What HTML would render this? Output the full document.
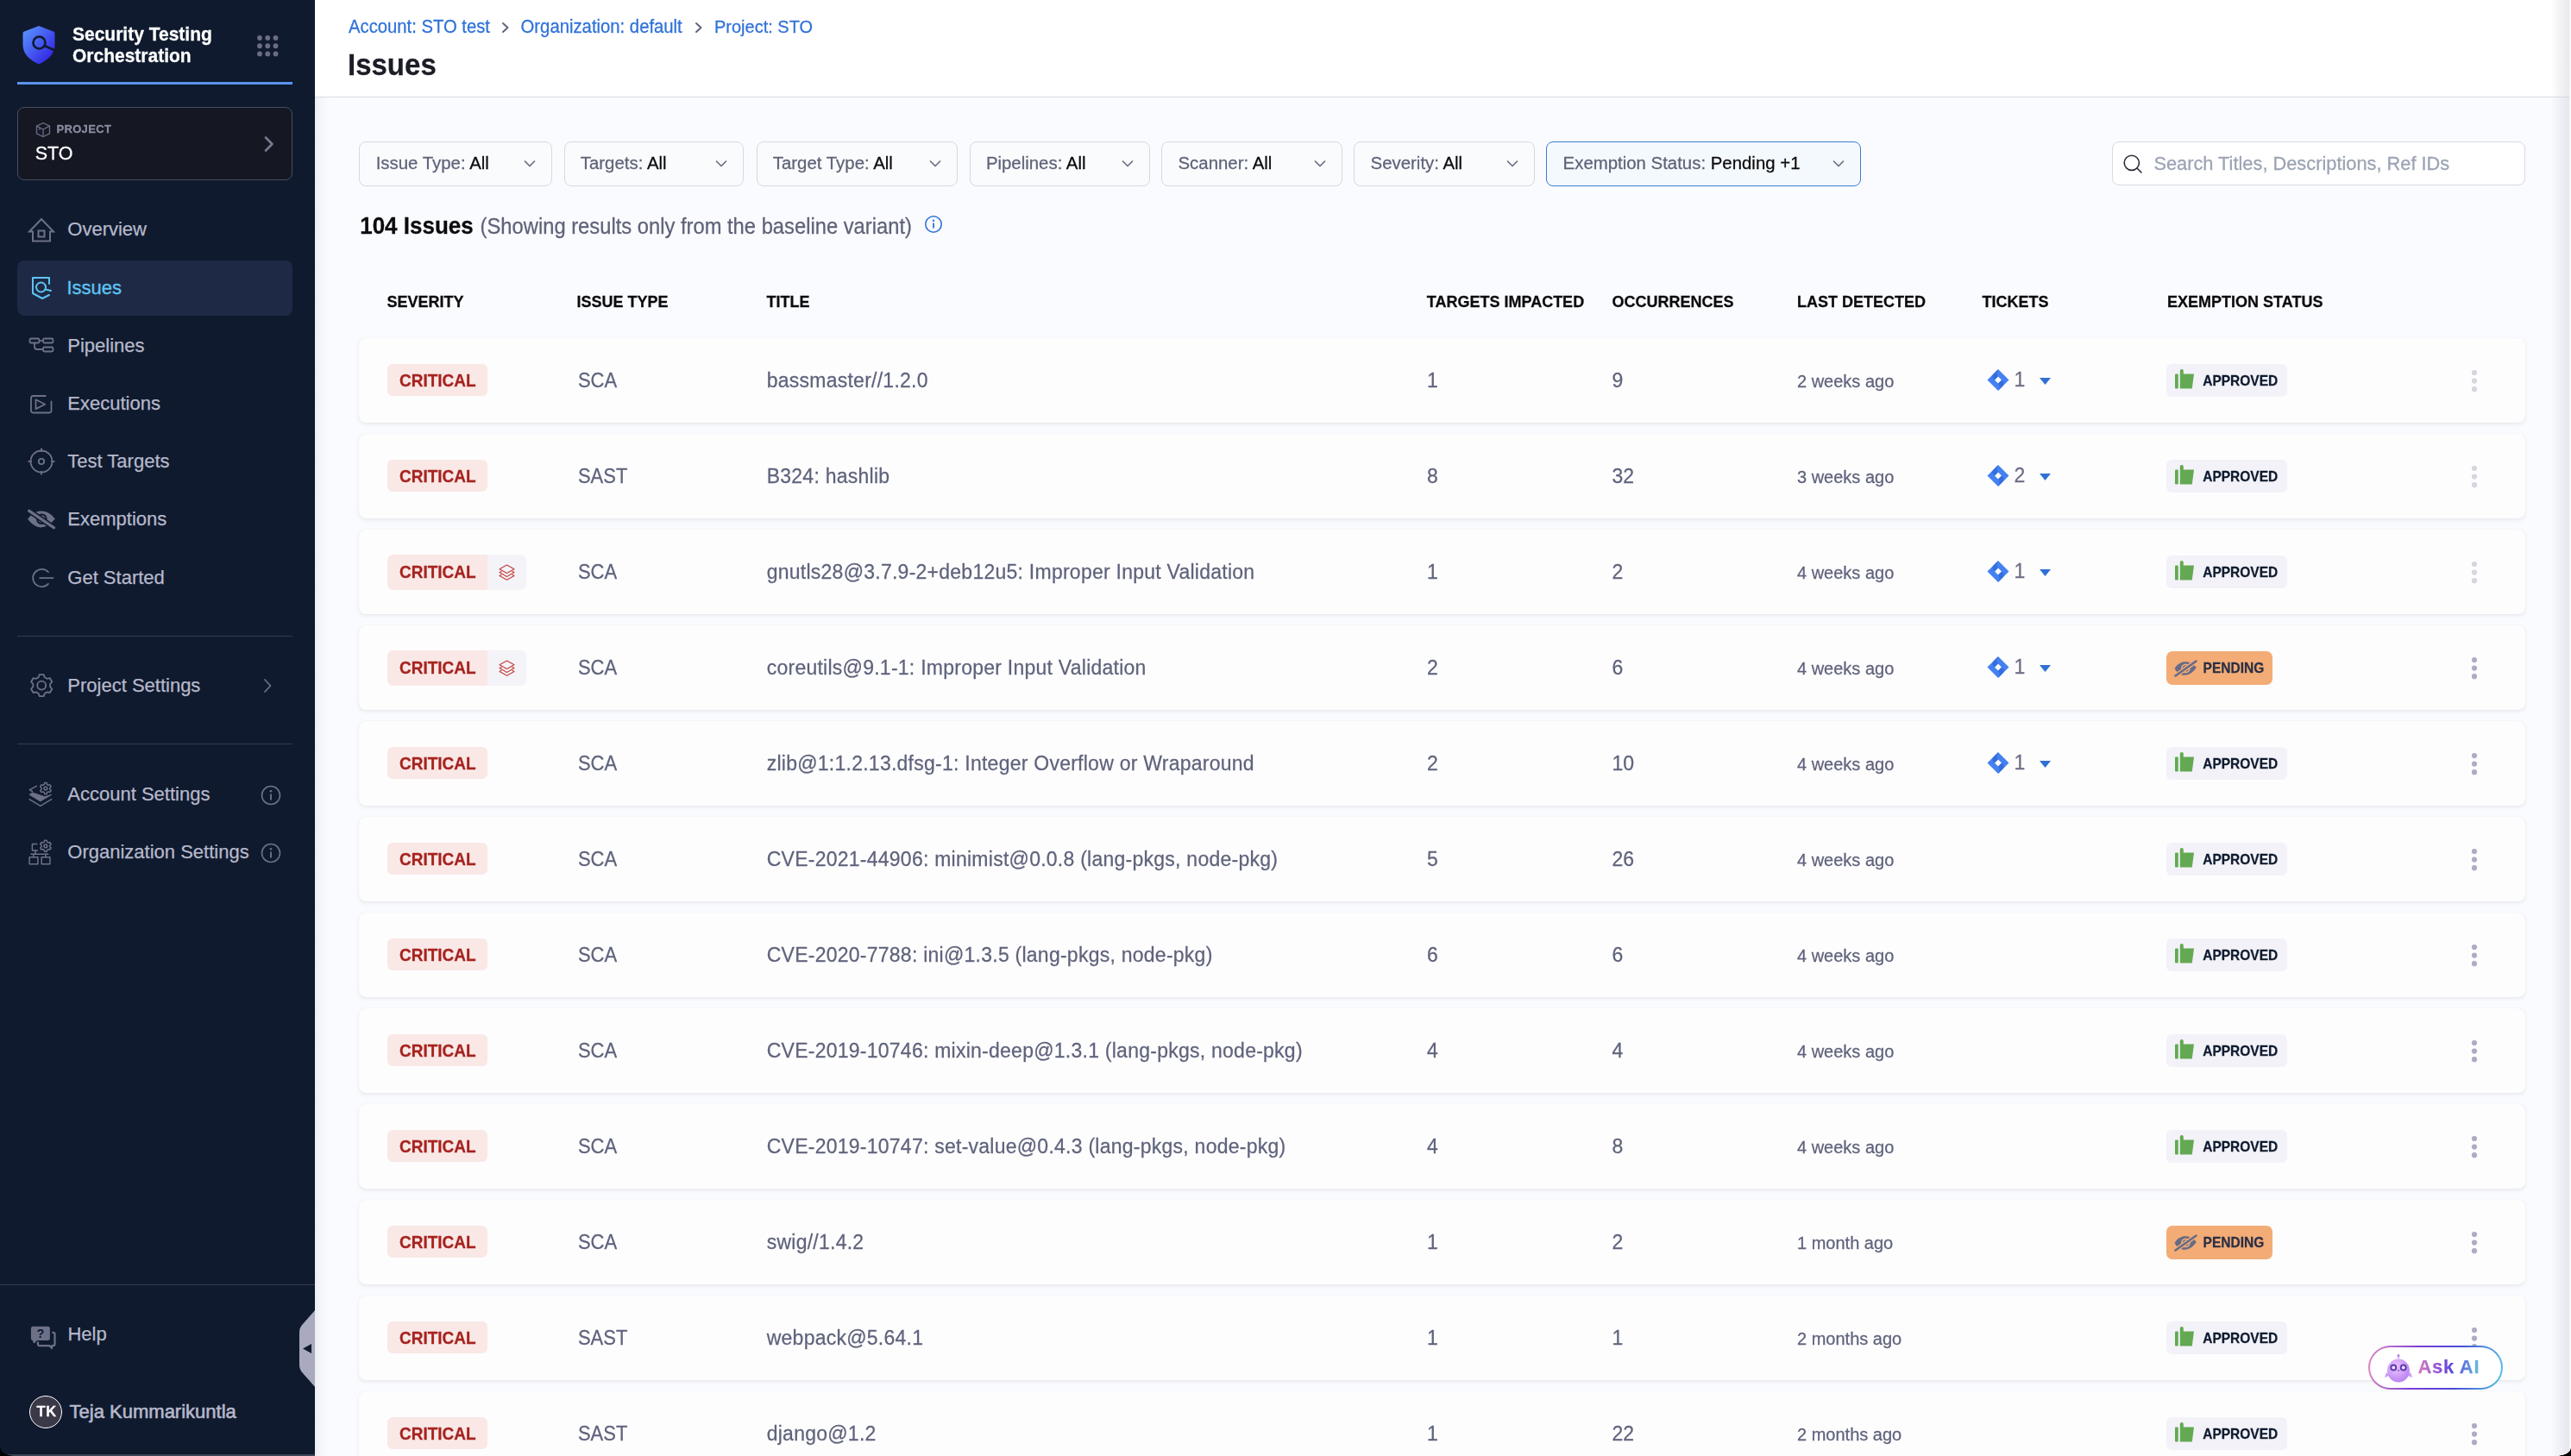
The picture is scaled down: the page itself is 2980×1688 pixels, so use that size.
<!DOCTYPE html>
<html><head><meta charset="utf-8"><title>Issues</title>
<style>
html,body{margin:0;padding:0;width:2980px;height:1688px;overflow:hidden;background:#fafbfe;}
body{position:relative;font-family:"Liberation Sans", sans-serif;}
.t{position:absolute;white-space:nowrap;line-height:1;font-family:"Liberation Sans", sans-serif;-webkit-text-stroke:0.25px currentColor;}
svg{display:block;overflow:visible;}
</style></head><body>
<div style="position:absolute;left:0.0px;top:0.0px;width:365.0px;height:1688.0px;background:#0f1a2e;"></div><svg style="position:absolute;left:24.0px;top:28.0px;" width="42" height="48" viewBox="0 0 42 48">
<defs><linearGradient id="lg" x1="0" y1="0" x2="1" y2="1"><stop offset="0" stop-color="#5b9bff"/><stop offset="1" stop-color="#2d14e0"/></linearGradient></defs>
<path d="M21 2 L39 9 Q39.5 10 39.5 12 L39.5 24 Q39.5 38 21 46.5 Q2.5 38 2.5 24 L2.5 12 Q2.5 10 3 9 Z" fill="url(#lg)"/>
<circle cx="21.5" cy="21.5" r="7" fill="none" stroke="#0f1a2e" stroke-width="2.6"/>
<path d="M27.5 25 L38.5 30" stroke="#0f1a2e" stroke-width="2.6" stroke-linecap="round"/>
</svg><div class="t" style="left:84.0px;top:29.3px;font-size:21px;color:#ffffff;font-weight:700;letter-spacing:0px;transform-origin:0 17.78px;transform:scaleY(1.05);">Security Testing</div><div class="t" style="left:84.0px;top:53.8px;font-size:21px;color:#ffffff;font-weight:700;letter-spacing:0px;transform-origin:0 17.78px;transform:scaleY(1.05);">Orchestration</div><svg style="position:absolute;left:297.6px;top:40.5px;" width="25" height="25" viewBox="0 0 25 25"><circle cx="3.00" cy="3.00" r="2.9" fill="#6b6d84"/><circle cx="3.00" cy="12.25" r="2.9" fill="#6b6d84"/><circle cx="3.00" cy="21.50" r="2.9" fill="#6b6d84"/><circle cx="12.25" cy="3.00" r="2.9" fill="#6b6d84"/><circle cx="12.25" cy="12.25" r="2.9" fill="#6b6d84"/><circle cx="12.25" cy="21.50" r="2.9" fill="#6b6d84"/><circle cx="21.50" cy="3.00" r="2.9" fill="#6b6d84"/><circle cx="21.50" cy="12.25" r="2.9" fill="#6b6d84"/><circle cx="21.50" cy="21.50" r="2.9" fill="#6b6d84"/></svg><div style="position:absolute;left:20.0px;top:95.0px;width:319.0px;height:3.0px;background:#5a93f5;"></div><div style="position:absolute;left:20.0px;top:124.0px;width:319.0px;height:85.0px;box-sizing:border-box;border:1.5px solid #4a4d5f;border-radius:8px;background:#151823;"></div><svg style="position:absolute;left:41.0px;top:141.0px;" width="18" height="19" viewBox="0 0 18 19"><g fill="none" stroke="#6b6d84" stroke-width="1.3" stroke-linejoin="round">
<path d="M9 1.5 L16.5 5.2 L16.5 13.8 L9 17.5 L1.5 13.8 L1.5 5.2 Z"/><path d="M1.5 5.2 L9 9 L16.5 5.2"/><path d="M9 9 L9 17.5"/><path d="M5 7.2 L5 10"/></g></svg><div class="t" style="left:65.4px;top:143.1px;font-size:13px;color:#8b8da2;font-weight:700;letter-spacing:0.35px;transform-origin:0 11.00px;transform:scaleY(1.05);">PROJECT</div><div class="t" style="left:40.7px;top:167.9px;font-size:21.5px;color:#ffffff;font-weight:400;letter-spacing:0px;transform-origin:0 18.20px;transform:scaleY(1.05);">STO</div><svg style="position:absolute;left:304.0px;top:157.0px;" width="16" height="20" viewBox="0 0 16 20"><path d="M4 2.5 L11.5 10 L4 17.5" fill="none" stroke="#777990" stroke-width="2.6" stroke-linecap="round" stroke-linejoin="round"/></svg><div style="position:absolute;left:20.0px;top:302.0px;width:319.0px;height:64.0px;background:#1e2a45;border-radius:8px;"></div><div class="t" style="left:78.3px;top:255.1px;font-size:22px;color:#b6b8cb;font-weight:400;letter-spacing:0px;transform-origin:0 18.62px;transform:scaleY(1.0);">Overview</div><div class="t" style="left:77.5px;top:323.2px;font-size:22px;color:#5ec4f3;font-weight:400;letter-spacing:0px;transform-origin:0 18.62px;transform:scaleY(1.0);-webkit-text-stroke:0.35px #5ec4f3;">Issues</div><div class="t" style="left:78.3px;top:389.5px;font-size:22px;color:#b6b8cb;font-weight:400;letter-spacing:0px;transform-origin:0 18.62px;transform:scaleY(1.0);">Pipelines</div><div class="t" style="left:78.3px;top:456.5px;font-size:22px;color:#b6b8cb;font-weight:400;letter-spacing:0px;transform-origin:0 18.62px;transform:scaleY(1.0);">Executions</div><div class="t" style="left:78.3px;top:523.8px;font-size:22px;color:#b6b8cb;font-weight:400;letter-spacing:0px;transform-origin:0 18.62px;transform:scaleY(1.0);">Test Targets</div><div class="t" style="left:78.3px;top:590.6px;font-size:22px;color:#b6b8cb;font-weight:400;letter-spacing:0px;transform-origin:0 18.62px;transform:scaleY(1.0);">Exemptions</div><div class="t" style="left:78.3px;top:658.5px;font-size:22px;color:#b6b8cb;font-weight:400;letter-spacing:0px;transform-origin:0 18.62px;transform:scaleY(1.0);">Get Started</div><svg style="position:absolute;left:32.0px;top:250.0px;" width="32" height="32" viewBox="0 0 32 32"><g fill="none" stroke="#6d7089" stroke-width="2" stroke-linejoin="miter">
<path d="M2 18.5 L16 4 L30 18.5 L26 18.5 L26 29.5 L6 29.5 L6 18.5 Z"/><rect x="12.5" y="17.5" width="7" height="7"/></g></svg><svg style="position:absolute;left:34.0px;top:319.0px;" width="30" height="30" viewBox="0 0 30 30"><g fill="none" stroke="#5ec4f3" stroke-width="2" stroke-linecap="round" stroke-linejoin="round">
<path d="M23 3 L4 3 L4 21 L15 27 L23 23"/><path d="M23 3 L23 10"/><circle cx="13.5" cy="14" r="5.5"/><path d="M18.5 16.5 L25 18"/></g></svg><svg style="position:absolute;left:33.0px;top:391.0px;" width="32" height="20" viewBox="0 0 32 20"><g fill="none" stroke="#6d7089" stroke-width="1.8">
<rect x="1.5" y="1.5" width="11" height="5" rx="1.5"/><rect x="17" y="1.5" width="11.5" height="5" rx="1.5"/><rect x="17" y="11.5" width="11.5" height="5" rx="1.5"/>
<path d="M12.5 4 L17 4"/><path d="M7 6.5 L7 11 Q7 14 10 14 L17 14"/></g></svg><svg style="position:absolute;left:34.2px;top:456.8px;" width="30" height="24" viewBox="0 0 30 24"><g fill="none" stroke="#6d7089" stroke-width="1.8" stroke-linejoin="round" stroke-linecap="round">
<path d="M18.8 2 L4.4 2 Q2 2 2 4.4 L2 19.1 Q2 21.5 4.4 21.5 L23.1 21.5 Q25.5 21.5 25.5 19.1 L25.5 8.5"/><path d="M7.5 6.3 L18.2 11.7 L7.5 17.1 Z"/></g></svg><svg style="position:absolute;left:31.0px;top:518.0px;" width="34" height="34" viewBox="0 0 34 34"><g fill="none" stroke="#6d7089" stroke-width="1.8">
<circle cx="17" cy="17" r="12.5"/><circle cx="17" cy="17" r="3.2"/><path d="M17 1.5 L17 6"/><path d="M17 28 L17 32.5"/><path d="M1.5 17 L6 17"/><path d="M28 17 L32.5 17"/></g></svg><svg style="position:absolute;left:28.0px;top:585.0px;" width="42" height="35" viewBox="0 0 42 35"><path d="M4.1 16.8 C9 10 14 7.5 20 7.5 C26 7.5 31 10.5 35.8 16.6 C31 22.5 26 26.4 19.5 26.4 C13.5 26.4 8.5 22.5 4.1 16.8 Z" fill="#6d7089"/>
<circle cx="20.3" cy="16.8" r="6.3" fill="#0f1a2e"/><circle cx="20.3" cy="16.8" r="4.3" fill="#6d7089"/>
<path d="M5.6 7.1 L34.6 26.9" stroke="#0f1a2e" stroke-width="6.4" stroke-linecap="round"/>
<path d="M5.6 7.1 L34.6 26.9" stroke="#6d7089" stroke-width="3.1" stroke-linecap="round"/></svg><svg style="position:absolute;left:28.0px;top:650.0px;" width="40" height="40" viewBox="0 0 40 40"><g fill="none" stroke="#6d7089" stroke-width="1.8" stroke-linecap="round">
<path d="M27.98 13.27 A10.2 10.2 0 1 0 27.98 26.93"/><path d="M18.1 20.1 L33.5 20.1"/></g></svg><div style="position:absolute;left:20.0px;top:737.0px;width:319.0px;height:1.0px;background:#353a4f;"></div><div class="t" style="left:78.3px;top:783.5px;font-size:22px;color:#b6b8cb;font-weight:400;letter-spacing:0px;transform-origin:0 18.62px;transform:scaleY(1.0);">Project Settings</div><svg style="position:absolute;left:28.0px;top:775.0px;" width="40" height="40" viewBox="0 0 40 40"><g fill="none" stroke="#6d7089" stroke-width="1.8" stroke-linejoin="round">
<path d="M16.62 10.26 L17.76 7.04 L22.64 7.04 L23.78 10.26 L26.49 11.83 L29.86 11.20 L32.30 15.43 L30.08 18.04 L30.08 21.16 L32.30 23.77 L29.86 28.00 L26.49 27.37 L23.78 28.94 L22.64 32.16 L17.76 32.16 L16.62 28.94 L13.91 27.37 L10.54 28.00 L8.10 23.77 L10.32 21.16 L10.32 18.04 L8.10 15.43 L10.54 11.20 L13.91 11.83 Z"/><circle cx="20.2" cy="19.6" r="5.0"/></g></svg><svg style="position:absolute;left:303.0px;top:786.0px;" width="14" height="18" viewBox="0 0 14 18"><path d="M4 2 L10.5 9 L4 16" fill="none" stroke="#6d7089" stroke-width="1.8" stroke-linecap="round" stroke-linejoin="round"/></svg><div style="position:absolute;left:20.0px;top:862.0px;width:319.0px;height:1.0px;background:#353a4f;"></div><div class="t" style="left:78.3px;top:909.9px;font-size:22px;color:#b6b8cb;font-weight:400;letter-spacing:0px;transform-origin:0 18.62px;transform:scaleY(1.0);">Account Settings</div><div class="t" style="left:78.3px;top:976.6px;font-size:22px;color:#b6b8cb;font-weight:400;letter-spacing:0px;transform-origin:0 18.62px;transform:scaleY(1.0);">Organization Settings</div><svg style="position:absolute;left:302.0px;top:910.0px;" width="24" height="24" viewBox="0 0 24 24"><g fill="none" stroke="#6d7089" stroke-width="1.6"><circle cx="12" cy="12" r="10.5"/></g>
<circle cx="12" cy="7.2" r="1.3" fill="#6d7089"/><path d="M12 10.5 L12 17.5" stroke="#6d7089" stroke-width="1.9"/></svg><svg style="position:absolute;left:302.0px;top:977.0px;" width="24" height="24" viewBox="0 0 24 24"><g fill="none" stroke="#6d7089" stroke-width="1.6"><circle cx="12" cy="12" r="10.5"/></g>
<circle cx="12" cy="7.2" r="1.3" fill="#6d7089"/><path d="M12 10.5 L12 17.5" stroke="#6d7089" stroke-width="1.9"/></svg><svg style="position:absolute;left:28.0px;top:900.0px;" width="44" height="105" viewBox="0 0 44 105"><g fill="none" stroke="#6d7089" stroke-width="1.5" stroke-linejoin="round" stroke-linecap="round">
<path d="M14.4 11.4 L6.3 15.7 L9.4 17.5"/><path d="M6.1 26.7 L18.8 34.3 L31.7 26.7"/>
<path d="M23.22 9.50 L23.64 7.62 L26.16 7.62 L26.58 9.50 L28.05 10.35 L29.88 9.77 L31.14 11.95 L29.73 13.25 L29.73 14.95 L31.14 16.25 L29.88 18.43 L28.05 17.85 L26.58 18.70 L26.16 20.58 L23.64 20.58 L23.22 18.70 L21.75 17.85 L19.92 18.43 L18.66 16.25 L20.07 14.95 L20.07 13.25 L18.66 11.95 L19.92 9.77 L21.75 10.35 Z"/><circle cx="24.9" cy="14.1" r="1.9"/>
<path d="M23.22 76.20 L23.64 74.32 L26.16 74.32 L26.58 76.20 L28.05 77.05 L29.88 76.47 L31.14 78.65 L29.73 79.95 L29.73 81.65 L31.14 82.95 L29.88 85.13 L28.05 84.55 L26.58 85.40 L26.16 87.28 L23.64 87.28 L23.22 85.40 L21.75 84.55 L19.92 85.13 L18.66 82.95 L20.07 81.65 L20.07 79.95 L18.66 78.65 L19.92 76.47 L21.75 77.05 Z"/><circle cx="24.9" cy="80.8" r="1.9"/>
<path d="M14.8 78.6 L9.4 78.6 L9.4 85.9 L15.5 85.9"/><path d="M13 85.9 L13 90.2"/><path d="M7.9 90.2 L27.8 90.2"/>
<path d="M10.8 90.2 L10.8 93.8"/><path d="M24.9 90.2 L24.9 93.8"/>
<rect x="6.1" y="93.8" width="9.8" height="7.9"/><rect x="20.2" y="93.8" width="9.7" height="7.9"/></g>
<path d="M6.1 21.3 L9.4 18.9 L23.8 23.8 L31.7 21.3 L18.8 28.9 Z" fill="#6d7089" stroke="#6d7089" stroke-width="1" stroke-linejoin="round"/></svg><div style="position:absolute;left:0.0px;top:1489.0px;width:365.0px;height:1.0px;background:#353a4f;"></div><svg style="position:absolute;left:30.0px;top:1530.0px;" width="40" height="40" viewBox="0 0 40 40"><rect x="5.9" y="7.7" width="22" height="16.2" rx="2.6" fill="#6d7089"/><path d="M6.2 21 L9.4 27.8 L13.4 23.6 Z" fill="#6d7089"/>
<path d="M14 25.6 L14 28.6 Q14 30.2 15.6 30.2 L27.2 30.2 L29.9 32.6 L30.4 30.2 Q33.5 30.2 33.5 28.4 L33.5 16.6 Q33.5 14.9 31.8 14.9 L30.4 14.9" fill="none" stroke="#6d7089" stroke-width="2.2"/>
<text x="16.9" y="20.9" font-family="Liberation Sans" font-weight="700" font-size="14.5" fill="#0f1a2e" text-anchor="middle">?</text></svg><div class="t" style="left:78.4px;top:1535.9px;font-size:22px;color:#b6b8cb;font-weight:400;letter-spacing:0px;transform-origin:0 18.62px;transform:scaleY(1.0);">Help</div><div style="position:absolute;left:34px;top:1618px;width:38px;height:38px;box-sizing:border-box;border:1.6px solid #ffffff;border-radius:50%;background:#3a3948;"></div><div class="t" style="left:42.6px;top:1628.4px;font-size:16.5px;color:#ffffff;font-weight:700;letter-spacing:0.5px;transform-origin:0 13.97px;transform:scaleY(1.03);">TK</div><div class="t" style="left:80.6px;top:1625.8px;font-size:22px;color:#b6b8cb;font-weight:400;letter-spacing:0px;transform-origin:0 18.62px;transform:scaleY(1.0);-webkit-text-stroke:0.6px #b6b8cb;">Teja Kummarikuntla</div><div style="position:absolute;left:0.0px;top:1686.0px;width:365.0px;height:2.0px;background:#3b4456;"></div><svg style="position:absolute;left:345.0px;top:1518.0px;" width="21" height="91" viewBox="0 0 21 91"><path d="M21 0 L21 91 L6 74 Q2 70 2 64 L2 27 Q2 21 6 17 Z" fill="#a9aabf"/>
<path d="M6 45.5 L16 40 L16 51 Z" fill="#0f1a2e"/></svg><div style="position:absolute;left:365.0px;top:0.0px;width:2615.0px;height:1688.0px;background:#fafbfe;"></div><div style="position:absolute;left:365.0px;top:113.0px;width:17.0px;height:1575.0px;background:linear-gradient(90deg,rgba(60,62,80,0.07) 0%,rgba(60,62,80,0.025) 45%,rgba(60,62,80,0) 100%);"></div><div style="position:absolute;left:365.0px;top:0.0px;width:2613.0px;height:112.0px;background:#ffffff;"></div><div style="position:absolute;left:365.0px;top:112.0px;width:2613.0px;height:1.0px;background:#d9dae5;"></div><div class="t" style="left:404.0px;top:21.0px;font-size:20.25px;color:#2f72d8;font-weight:400;letter-spacing:0px;transform-origin:0 17.14px;transform:scaleY(1.05);">Account: STO test</div><div class="t" style="left:603.6px;top:20.9px;font-size:20.3px;color:#2f72d8;font-weight:400;letter-spacing:0px;transform-origin:0 17.18px;transform:scaleY(1.05);">Organization: default</div><div class="t" style="left:828.0px;top:21.2px;font-size:20.0px;color:#2f72d8;font-weight:400;letter-spacing:0px;transform-origin:0 16.93px;transform:scaleY(1.05);">Project: STO</div><svg style="position:absolute;left:580.0px;top:24.0px;" width="12" height="16" viewBox="0 0 12 16"><path d="M3 3 L8.5 8 L3 13" fill="none" stroke="#5f6378" stroke-width="1.9" stroke-linecap="round" stroke-linejoin="round"/></svg><svg style="position:absolute;left:804.0px;top:24.0px;" width="12" height="16" viewBox="0 0 12 16"><path d="M3 3 L8.5 8 L3 13" fill="none" stroke="#5f6378" stroke-width="1.9" stroke-linecap="round" stroke-linejoin="round"/></svg><div class="t" style="left:403.0px;top:58.7px;font-size:33px;color:#1b1c26;font-weight:700;letter-spacing:0px;transform-origin:0 27.93px;transform:scaleY(1.05);">Issues</div><div style="position:absolute;left:416.4px;top:164.4px;width:223.2px;height:52.0px;box-sizing:border-box;border:1.3px solid #d8d9e3;border-radius:8px;background:#fafbfd;"></div><div class="t" style="left:435.7px;top:179.3px;font-size:20.4px;color:#5f6378;transform-origin:0 17.27px;transform:scaleY(1.03);">Issue Type: <span style="color:#0b0b0e">All</span></div><svg style="position:absolute;left:605.6px;top:183.0px;" width="16" height="14" viewBox="0 0 16 14"><path d="M2.5 4 L8 9.5 L13.5 4" fill="none" stroke="#6b6e84" stroke-width="1.7" stroke-linecap="round" stroke-linejoin="round"/></svg><div style="position:absolute;left:653.5px;top:164.4px;width:208.8px;height:52.0px;box-sizing:border-box;border:1.3px solid #d8d9e3;border-radius:8px;background:#fafbfd;"></div><div class="t" style="left:672.8px;top:179.3px;font-size:20.4px;color:#5f6378;transform-origin:0 17.27px;transform:scaleY(1.03);">Targets: <span style="color:#0b0b0e">All</span></div><svg style="position:absolute;left:828.3px;top:183.0px;" width="16" height="14" viewBox="0 0 16 14"><path d="M2.5 4 L8 9.5 L13.5 4" fill="none" stroke="#6b6e84" stroke-width="1.7" stroke-linecap="round" stroke-linejoin="round"/></svg><div style="position:absolute;left:876.5px;top:164.4px;width:233.5px;height:52.0px;box-sizing:border-box;border:1.3px solid #d8d9e3;border-radius:8px;background:#fafbfd;"></div><div class="t" style="left:895.8px;top:179.3px;font-size:20.4px;color:#5f6378;transform-origin:0 17.27px;transform:scaleY(1.03);">Target Type: <span style="color:#0b0b0e">All</span></div><svg style="position:absolute;left:1076.0px;top:183.0px;" width="16" height="14" viewBox="0 0 16 14"><path d="M2.5 4 L8 9.5 L13.5 4" fill="none" stroke="#6b6e84" stroke-width="1.7" stroke-linecap="round" stroke-linejoin="round"/></svg><div style="position:absolute;left:1123.6px;top:164.4px;width:209.1px;height:52.0px;box-sizing:border-box;border:1.3px solid #d8d9e3;border-radius:8px;background:#fafbfd;"></div><div class="t" style="left:1142.9px;top:179.3px;font-size:20.4px;color:#5f6378;transform-origin:0 17.27px;transform:scaleY(1.03);">Pipelines: <span style="color:#0b0b0e">All</span></div><svg style="position:absolute;left:1298.7px;top:183.0px;" width="16" height="14" viewBox="0 0 16 14"><path d="M2.5 4 L8 9.5 L13.5 4" fill="none" stroke="#6b6e84" stroke-width="1.7" stroke-linecap="round" stroke-linejoin="round"/></svg><div style="position:absolute;left:1346.2px;top:164.4px;width:209.5px;height:52.0px;box-sizing:border-box;border:1.3px solid #d8d9e3;border-radius:8px;background:#fafbfd;"></div><div class="t" style="left:1365.5px;top:179.3px;font-size:20.4px;color:#5f6378;transform-origin:0 17.27px;transform:scaleY(1.03);">Scanner: <span style="color:#0b0b0e">All</span></div><svg style="position:absolute;left:1521.7px;top:183.0px;" width="16" height="14" viewBox="0 0 16 14"><path d="M2.5 4 L8 9.5 L13.5 4" fill="none" stroke="#6b6e84" stroke-width="1.7" stroke-linecap="round" stroke-linejoin="round"/></svg><div style="position:absolute;left:1569.3px;top:164.4px;width:209.5px;height:52.0px;box-sizing:border-box;border:1.3px solid #d8d9e3;border-radius:8px;background:#fafbfd;"></div><div class="t" style="left:1588.6px;top:179.3px;font-size:20.4px;color:#5f6378;transform-origin:0 17.27px;transform:scaleY(1.03);">Severity: <span style="color:#0b0b0e">All</span></div><svg style="position:absolute;left:1744.8px;top:183.0px;" width="16" height="14" viewBox="0 0 16 14"><path d="M2.5 4 L8 9.5 L13.5 4" fill="none" stroke="#6b6e84" stroke-width="1.7" stroke-linecap="round" stroke-linejoin="round"/></svg><div style="position:absolute;left:1792.3px;top:164.4px;width:364.7px;height:52.0px;box-sizing:border-box;border:1.3px solid #3a7dd6;border-radius:8px;background:#f4f9fd;"></div><div class="t" style="left:1811.6px;top:179.3px;font-size:20.4px;color:#5f6378;transform-origin:0 17.27px;transform:scaleY(1.03);">Exemption Status: <span style="color:#0b0b0e">Pending +1</span></div><svg style="position:absolute;left:2123.0px;top:183.0px;" width="16" height="14" viewBox="0 0 16 14"><path d="M2.5 4 L8 9.5 L13.5 4" fill="none" stroke="#6b6e84" stroke-width="1.7" stroke-linecap="round" stroke-linejoin="round"/></svg><div style="position:absolute;left:2447.6px;top:164.2px;width:479.1px;height:50.4px;box-sizing:border-box;border:1.3px solid #d8d9e3;border-radius:8px;background:#ffffff;"></div><svg style="position:absolute;left:2459.0px;top:177.0px;" width="26" height="26" viewBox="0 0 26 26"><circle cx="11.8" cy="11.8" r="8.6" fill="none" stroke="#2b2d3b" stroke-width="1.6"/><path d="M18 18 L23 23" stroke="#2b2d3b" stroke-width="1.6" stroke-linecap="round"/></svg><div class="t" style="left:2496.4px;top:178.7px;font-size:21.8px;color:#9ba3b3;font-weight:400;letter-spacing:0px;transform-origin:0 18.45px;transform:scaleY(1.05);">Search Titles, Descriptions, Ref IDs</div><div class="t" style="left:417.2px;top:248.9px;font-size:26px;color:#0b0b0e;font-weight:700;letter-spacing:0px;transform-origin:0 22.01px;transform:scaleY(1.05);">104 Issues</div><div class="t" style="left:556.6px;top:250.8px;font-size:23.75px;color:#5f6378;font-weight:400;letter-spacing:0px;transform-origin:0 20.10px;transform:scaleY(1.05);">(Showing results only from the baseline variant)</div><svg style="position:absolute;left:1071.0px;top:249.0px;" width="22" height="22" viewBox="0 0 22 22"><circle cx="11" cy="11" r="9.2" fill="none" stroke="#2f72d8" stroke-width="1.6"/><circle cx="11" cy="6.8" r="1.2" fill="#2f72d8"/><path d="M11 9.5 L11 15.5" stroke="#2f72d8" stroke-width="1.8"/></svg><div class="t" style="left:448.6px;top:340.9px;font-size:18px;color:#0b0b0e;font-weight:700;letter-spacing:0px;transform-origin:0 15.24px;transform:scaleY(1.05);">SEVERITY</div><div class="t" style="left:668.6px;top:340.9px;font-size:18px;color:#0b0b0e;font-weight:700;letter-spacing:0px;transform-origin:0 15.24px;transform:scaleY(1.05);">ISSUE TYPE</div><div class="t" style="left:888.5px;top:340.9px;font-size:18px;color:#0b0b0e;font-weight:700;letter-spacing:0px;transform-origin:0 15.24px;transform:scaleY(1.05);">TITLE</div><div class="t" style="left:1653.8px;top:340.9px;font-size:18px;color:#0b0b0e;font-weight:700;letter-spacing:0px;transform-origin:0 15.24px;transform:scaleY(1.05);">TARGETS IMPACTED</div><div class="t" style="left:1868.5px;top:340.9px;font-size:18px;color:#0b0b0e;font-weight:700;letter-spacing:0px;transform-origin:0 15.24px;transform:scaleY(1.05);">OCCURRENCES</div><div class="t" style="left:2082.9px;top:340.9px;font-size:18px;color:#0b0b0e;font-weight:700;letter-spacing:0px;transform-origin:0 15.24px;transform:scaleY(1.05);">LAST DETECTED</div><div class="t" style="left:2297.6px;top:340.9px;font-size:18px;color:#0b0b0e;font-weight:700;letter-spacing:0px;transform-origin:0 15.24px;transform:scaleY(1.05);">TICKETS</div><div class="t" style="left:2512.1px;top:340.9px;font-size:18px;color:#0b0b0e;font-weight:700;letter-spacing:0px;transform-origin:0 15.24px;transform:scaleY(1.05);">EXEMPTION STATUS</div><div style="position:absolute;left:416.2px;top:392.3px;width:2510.5px;height:97.6px;background:#fdfdfe;border-radius:8px;box-shadow:0 2px 4px rgba(60,62,80,0.09), 0 0 1px rgba(60,62,80,0.10);"></div><div style="position:absolute;left:449.0px;top:421.9px;width:116.0px;height:37.6px;background:#f9e8e6;border-radius:6px;"></div><div class="t" style="left:463.0px;top:432.0px;font-size:19px;color:#a6231f;font-weight:700;letter-spacing:0px;transform-origin:0 16.08px;transform:scaleY(1.05);">CRITICAL</div><div class="t" style="left:669.9px;top:430.7px;font-size:22px;color:#5f637b;font-weight:400;letter-spacing:0px;transform-origin:0 18.62px;transform:scaleY(1.05);">SCA</div><div class="t" style="left:888.7px;top:429.7px;font-size:23px;color:#5f637b;font-weight:400;letter-spacing:0.25px;transform-origin:0 19.47px;transform:scaleY(1.05);">bassmaster//1.2.0</div><div class="t" style="left:1654.0px;top:429.5px;font-size:23px;color:#5f637b;font-weight:400;letter-spacing:0px;transform-origin:0 19.47px;transform:scaleY(1.05);">1</div><div class="t" style="left:1868.5px;top:429.5px;font-size:23px;color:#5f637b;font-weight:400;letter-spacing:0px;transform-origin:0 19.47px;transform:scaleY(1.05);">9</div><div class="t" style="left:2083.0px;top:432.4px;font-size:20px;color:#5f637b;font-weight:400;letter-spacing:0px;transform-origin:0 16.93px;transform:scaleY(1.05);">2 weeks ago</div><svg style="position:absolute;left:2302.0px;top:426.8px;" width="28" height="28" viewBox="0 0 28 28"><path d="M14 1 L26.5 13.5 L14 26 L1.5 13.5 Z" fill="#4481f1"/><path d="M14 9.5 L18 13.5 L14 17.5 L10 13.5 Z" fill="#fdfdfe"/>
<path d="M14 1 L8 7 Q6 11 10 13.5 L14 9.5 Q11 6 14 1 Z" fill="#2a5cd0" opacity="0.55"/><path d="M14 26 L20 20 Q22 16 18 13.5 L14 17.5 Q17 21 14 26 Z" fill="#2a5cd0" opacity="0.55"/></svg><div class="t" style="left:2334.5px;top:429.3px;font-size:23px;color:#6b6d85;font-weight:400;letter-spacing:0px;transform-origin:0 19.47px;transform:scaleY(1.05);">1</div><svg style="position:absolute;left:2363.0px;top:436.6px;" width="15" height="10" viewBox="0 0 15 10"><path d="M1 1 L14 1 L7.5 9 Z" fill="#2f70d2"/></svg><div style="position:absolute;left:2511.0px;top:421.9px;width:139.6px;height:38.0px;background:#f3f2f8;border-radius:6px;"></div><svg style="position:absolute;left:2519.0px;top:426.0px;" width="27" height="27" viewBox="0 0 27 27"><g fill="#63a952"><rect x="2" y="7.4" width="3.8" height="17.1" rx="1"/>
<path d="M7.8 24.5 L7.8 4 Q7.8 2 9.8 2 Q11.8 2 11.8 4 L11.8 7.4 L24 7.4 L21.8 24.5 Z"/></g></svg><div class="t" style="left:2553.2px;top:433.8px;font-size:15.5px;color:#0e1b2f;font-weight:700;letter-spacing:0px;transform-origin:0 13.12px;transform:scaleY(1.05);">APPROVED</div><svg style="position:absolute;left:2863.0px;top:427.7px;" width="10" height="28" viewBox="0 0 10 28"><circle cx="5" cy="4.0" r="3.1" fill="#d5d6e0"/><circle cx="5" cy="13.6" r="3.1" fill="#d5d6e0"/><circle cx="5" cy="23.2" r="3.1" fill="#d5d6e0"/></svg><div style="position:absolute;left:416.2px;top:503.3px;width:2510.5px;height:97.6px;background:#fdfdfe;border-radius:8px;box-shadow:0 2px 4px rgba(60,62,80,0.09), 0 0 1px rgba(60,62,80,0.10);"></div><div style="position:absolute;left:449.0px;top:532.9px;width:116.0px;height:37.6px;background:#f9e8e6;border-radius:6px;"></div><div class="t" style="left:463.0px;top:543.0px;font-size:19px;color:#a6231f;font-weight:700;letter-spacing:0px;transform-origin:0 16.08px;transform:scaleY(1.05);">CRITICAL</div><div class="t" style="left:669.9px;top:541.7px;font-size:22px;color:#5f637b;font-weight:400;letter-spacing:0px;transform-origin:0 18.62px;transform:scaleY(1.05);">SAST</div><div class="t" style="left:888.7px;top:540.7px;font-size:23px;color:#5f637b;font-weight:400;letter-spacing:0.25px;transform-origin:0 19.47px;transform:scaleY(1.05);">B324: hashlib</div><div class="t" style="left:1654.0px;top:540.5px;font-size:23px;color:#5f637b;font-weight:400;letter-spacing:0px;transform-origin:0 19.47px;transform:scaleY(1.05);">8</div><div class="t" style="left:1868.5px;top:540.5px;font-size:23px;color:#5f637b;font-weight:400;letter-spacing:0px;transform-origin:0 19.47px;transform:scaleY(1.05);">32</div><div class="t" style="left:2083.0px;top:543.4px;font-size:20px;color:#5f637b;font-weight:400;letter-spacing:0px;transform-origin:0 16.93px;transform:scaleY(1.05);">3 weeks ago</div><svg style="position:absolute;left:2302.0px;top:537.8px;" width="28" height="28" viewBox="0 0 28 28"><path d="M14 1 L26.5 13.5 L14 26 L1.5 13.5 Z" fill="#4481f1"/><path d="M14 9.5 L18 13.5 L14 17.5 L10 13.5 Z" fill="#fdfdfe"/>
<path d="M14 1 L8 7 Q6 11 10 13.5 L14 9.5 Q11 6 14 1 Z" fill="#2a5cd0" opacity="0.55"/><path d="M14 26 L20 20 Q22 16 18 13.5 L14 17.5 Q17 21 14 26 Z" fill="#2a5cd0" opacity="0.55"/></svg><div class="t" style="left:2334.5px;top:540.3px;font-size:23px;color:#6b6d85;font-weight:400;letter-spacing:0px;transform-origin:0 19.47px;transform:scaleY(1.05);">2</div><svg style="position:absolute;left:2363.0px;top:547.6px;" width="15" height="10" viewBox="0 0 15 10"><path d="M1 1 L14 1 L7.5 9 Z" fill="#2f70d2"/></svg><div style="position:absolute;left:2511.0px;top:532.9px;width:139.6px;height:38.0px;background:#f3f2f8;border-radius:6px;"></div><svg style="position:absolute;left:2519.0px;top:537.0px;" width="27" height="27" viewBox="0 0 27 27"><g fill="#63a952"><rect x="2" y="7.4" width="3.8" height="17.1" rx="1"/>
<path d="M7.8 24.5 L7.8 4 Q7.8 2 9.8 2 Q11.8 2 11.8 4 L11.8 7.4 L24 7.4 L21.8 24.5 Z"/></g></svg><div class="t" style="left:2553.2px;top:544.8px;font-size:15.5px;color:#0e1b2f;font-weight:700;letter-spacing:0px;transform-origin:0 13.12px;transform:scaleY(1.05);">APPROVED</div><svg style="position:absolute;left:2863.0px;top:538.7px;" width="10" height="28" viewBox="0 0 10 28"><circle cx="5" cy="4.0" r="3.1" fill="#d5d6e0"/><circle cx="5" cy="13.6" r="3.1" fill="#d5d6e0"/><circle cx="5" cy="23.2" r="3.1" fill="#d5d6e0"/></svg><div style="position:absolute;left:416.2px;top:614.3px;width:2510.5px;height:97.6px;background:#fdfdfe;border-radius:8px;box-shadow:0 2px 4px rgba(60,62,80,0.09), 0 0 1px rgba(60,62,80,0.10);"></div><div style="position:absolute;left:449.0px;top:643.0px;width:161.0px;height:40.9px;background:#f4f3f8;border-radius:7px;"></div><div style="position:absolute;left:449.0px;top:643.0px;width:116.0px;height:40.9px;background:#f9e8e6;border-radius:7px 0 0 7px;"></div><svg style="position:absolute;left:577.0px;top:653.5px;" width="21" height="20" viewBox="0 0 21 20"><g fill="none" stroke="#c0413a" stroke-width="1.1" stroke-linejoin="round">
<path d="M10.5 1 L19 5.8 L10.5 10.6 L2 5.8 Z"/><path d="M4.5 8.2 L2 9.6 L10.5 14.4 L19 9.6 L16.5 8.2"/><path d="M4.5 12 L2 13.4 L10.5 18.2 L19 13.4 L16.5 12"/></g></svg><div class="t" style="left:463.0px;top:654.0px;font-size:19px;color:#a6231f;font-weight:700;letter-spacing:0px;transform-origin:0 16.08px;transform:scaleY(1.05);">CRITICAL</div><div class="t" style="left:669.9px;top:652.7px;font-size:22px;color:#5f637b;font-weight:400;letter-spacing:0px;transform-origin:0 18.62px;transform:scaleY(1.05);">SCA</div><div class="t" style="left:888.7px;top:651.7px;font-size:23px;color:#5f637b;font-weight:400;letter-spacing:0.25px;transform-origin:0 19.47px;transform:scaleY(1.05);">gnutls28@3.7.9-2+deb12u5: Improper Input Validation</div><div class="t" style="left:1654.0px;top:651.5px;font-size:23px;color:#5f637b;font-weight:400;letter-spacing:0px;transform-origin:0 19.47px;transform:scaleY(1.05);">1</div><div class="t" style="left:1868.5px;top:651.5px;font-size:23px;color:#5f637b;font-weight:400;letter-spacing:0px;transform-origin:0 19.47px;transform:scaleY(1.05);">2</div><div class="t" style="left:2083.0px;top:654.4px;font-size:20px;color:#5f637b;font-weight:400;letter-spacing:0px;transform-origin:0 16.93px;transform:scaleY(1.05);">4 weeks ago</div><svg style="position:absolute;left:2302.0px;top:648.8px;" width="28" height="28" viewBox="0 0 28 28"><path d="M14 1 L26.5 13.5 L14 26 L1.5 13.5 Z" fill="#4481f1"/><path d="M14 9.5 L18 13.5 L14 17.5 L10 13.5 Z" fill="#fdfdfe"/>
<path d="M14 1 L8 7 Q6 11 10 13.5 L14 9.5 Q11 6 14 1 Z" fill="#2a5cd0" opacity="0.55"/><path d="M14 26 L20 20 Q22 16 18 13.5 L14 17.5 Q17 21 14 26 Z" fill="#2a5cd0" opacity="0.55"/></svg><div class="t" style="left:2334.5px;top:651.3px;font-size:23px;color:#6b6d85;font-weight:400;letter-spacing:0px;transform-origin:0 19.47px;transform:scaleY(1.05);">1</div><svg style="position:absolute;left:2363.0px;top:658.6px;" width="15" height="10" viewBox="0 0 15 10"><path d="M1 1 L14 1 L7.5 9 Z" fill="#2f70d2"/></svg><div style="position:absolute;left:2511.0px;top:643.9px;width:139.6px;height:38.0px;background:#f3f2f8;border-radius:6px;"></div><svg style="position:absolute;left:2519.0px;top:648.0px;" width="27" height="27" viewBox="0 0 27 27"><g fill="#63a952"><rect x="2" y="7.4" width="3.8" height="17.1" rx="1"/>
<path d="M7.8 24.5 L7.8 4 Q7.8 2 9.8 2 Q11.8 2 11.8 4 L11.8 7.4 L24 7.4 L21.8 24.5 Z"/></g></svg><div class="t" style="left:2553.2px;top:655.8px;font-size:15.5px;color:#0e1b2f;font-weight:700;letter-spacing:0px;transform-origin:0 13.12px;transform:scaleY(1.05);">APPROVED</div><svg style="position:absolute;left:2863.0px;top:649.7px;" width="10" height="28" viewBox="0 0 10 28"><circle cx="5" cy="4.0" r="3.1" fill="#d5d6e0"/><circle cx="5" cy="13.6" r="3.1" fill="#d5d6e0"/><circle cx="5" cy="23.2" r="3.1" fill="#d5d6e0"/></svg><div style="position:absolute;left:416.2px;top:725.3px;width:2510.5px;height:97.6px;background:#fdfdfe;border-radius:8px;box-shadow:0 2px 4px rgba(60,62,80,0.09), 0 0 1px rgba(60,62,80,0.10);"></div><div style="position:absolute;left:449.0px;top:754.0px;width:161.0px;height:40.9px;background:#f4f3f8;border-radius:7px;"></div><div style="position:absolute;left:449.0px;top:754.0px;width:116.0px;height:40.9px;background:#f9e8e6;border-radius:7px 0 0 7px;"></div><svg style="position:absolute;left:577.0px;top:764.5px;" width="21" height="20" viewBox="0 0 21 20"><g fill="none" stroke="#c0413a" stroke-width="1.1" stroke-linejoin="round">
<path d="M10.5 1 L19 5.8 L10.5 10.6 L2 5.8 Z"/><path d="M4.5 8.2 L2 9.6 L10.5 14.4 L19 9.6 L16.5 8.2"/><path d="M4.5 12 L2 13.4 L10.5 18.2 L19 13.4 L16.5 12"/></g></svg><div class="t" style="left:463.0px;top:765.0px;font-size:19px;color:#a6231f;font-weight:700;letter-spacing:0px;transform-origin:0 16.08px;transform:scaleY(1.05);">CRITICAL</div><div class="t" style="left:669.9px;top:763.7px;font-size:22px;color:#5f637b;font-weight:400;letter-spacing:0px;transform-origin:0 18.62px;transform:scaleY(1.05);">SCA</div><div class="t" style="left:888.7px;top:762.7px;font-size:23px;color:#5f637b;font-weight:400;letter-spacing:0.25px;transform-origin:0 19.47px;transform:scaleY(1.05);">coreutils@9.1-1: Improper Input Validation</div><div class="t" style="left:1654.0px;top:762.5px;font-size:23px;color:#5f637b;font-weight:400;letter-spacing:0px;transform-origin:0 19.47px;transform:scaleY(1.05);">2</div><div class="t" style="left:1868.5px;top:762.5px;font-size:23px;color:#5f637b;font-weight:400;letter-spacing:0px;transform-origin:0 19.47px;transform:scaleY(1.05);">6</div><div class="t" style="left:2083.0px;top:765.4px;font-size:20px;color:#5f637b;font-weight:400;letter-spacing:0px;transform-origin:0 16.93px;transform:scaleY(1.05);">4 weeks ago</div><svg style="position:absolute;left:2302.0px;top:759.8px;" width="28" height="28" viewBox="0 0 28 28"><path d="M14 1 L26.5 13.5 L14 26 L1.5 13.5 Z" fill="#4481f1"/><path d="M14 9.5 L18 13.5 L14 17.5 L10 13.5 Z" fill="#fdfdfe"/>
<path d="M14 1 L8 7 Q6 11 10 13.5 L14 9.5 Q11 6 14 1 Z" fill="#2a5cd0" opacity="0.55"/><path d="M14 26 L20 20 Q22 16 18 13.5 L14 17.5 Q17 21 14 26 Z" fill="#2a5cd0" opacity="0.55"/></svg><div class="t" style="left:2334.5px;top:762.3px;font-size:23px;color:#6b6d85;font-weight:400;letter-spacing:0px;transform-origin:0 19.47px;transform:scaleY(1.05);">1</div><svg style="position:absolute;left:2363.0px;top:769.6px;" width="15" height="10" viewBox="0 0 15 10"><path d="M1 1 L14 1 L7.5 9 Z" fill="#2f70d2"/></svg><div style="position:absolute;left:2511.0px;top:755.0px;width:122.8px;height:38.9px;background:#f3ac76;border-radius:7px;"></div><svg style="position:absolute;left:2519.0px;top:763.6px;" width="30" height="22" viewBox="0 0 30 22"><path d="M1.6 11.2 C5 4.5 11 3 15 3.3 C20 3.6 24 6.5 26.9 9.8 C23.5 15 19 18.6 13 18.8 C8 18.8 4 15.5 1.6 11.2 Z" fill="#676b86"/>
<circle cx="14.3" cy="10.9" r="5.3" fill="#f3ac76"/><circle cx="14.3" cy="10.9" r="3.7" fill="#676b86"/>
<path d="M2.5 19.5 L26.5 2.5" stroke="#f3ac76" stroke-width="5.2" stroke-linecap="round"/>
<path d="M2.5 19.5 L26.5 2.5" stroke="#676b86" stroke-width="2.6" stroke-linecap="round"/></svg><div class="t" style="left:2553.6px;top:766.6px;font-size:15.5px;color:#2a2f45;font-weight:700;letter-spacing:0px;transform-origin:0 13.12px;transform:scaleY(1.05);">PENDING</div><svg style="position:absolute;left:2863.0px;top:760.7px;" width="10" height="28" viewBox="0 0 10 28"><circle cx="5" cy="4.0" r="3.1" fill="#acadc0"/><circle cx="5" cy="13.6" r="3.1" fill="#acadc0"/><circle cx="5" cy="23.2" r="3.1" fill="#acadc0"/></svg><div style="position:absolute;left:416.2px;top:836.3px;width:2510.5px;height:97.6px;background:#fdfdfe;border-radius:8px;box-shadow:0 2px 4px rgba(60,62,80,0.09), 0 0 1px rgba(60,62,80,0.10);"></div><div style="position:absolute;left:449.0px;top:865.9px;width:116.0px;height:37.6px;background:#f9e8e6;border-radius:6px;"></div><div class="t" style="left:463.0px;top:876.0px;font-size:19px;color:#a6231f;font-weight:700;letter-spacing:0px;transform-origin:0 16.08px;transform:scaleY(1.05);">CRITICAL</div><div class="t" style="left:669.9px;top:874.7px;font-size:22px;color:#5f637b;font-weight:400;letter-spacing:0px;transform-origin:0 18.62px;transform:scaleY(1.05);">SCA</div><div class="t" style="left:888.7px;top:873.7px;font-size:23px;color:#5f637b;font-weight:400;letter-spacing:0.25px;transform-origin:0 19.47px;transform:scaleY(1.05);">zlib@1:1.2.13.dfsg-1: Integer Overflow or Wraparound</div><div class="t" style="left:1654.0px;top:873.5px;font-size:23px;color:#5f637b;font-weight:400;letter-spacing:0px;transform-origin:0 19.47px;transform:scaleY(1.05);">2</div><div class="t" style="left:1868.5px;top:873.5px;font-size:23px;color:#5f637b;font-weight:400;letter-spacing:0px;transform-origin:0 19.47px;transform:scaleY(1.05);">10</div><div class="t" style="left:2083.0px;top:876.4px;font-size:20px;color:#5f637b;font-weight:400;letter-spacing:0px;transform-origin:0 16.93px;transform:scaleY(1.05);">4 weeks ago</div><svg style="position:absolute;left:2302.0px;top:870.8px;" width="28" height="28" viewBox="0 0 28 28"><path d="M14 1 L26.5 13.5 L14 26 L1.5 13.5 Z" fill="#4481f1"/><path d="M14 9.5 L18 13.5 L14 17.5 L10 13.5 Z" fill="#fdfdfe"/>
<path d="M14 1 L8 7 Q6 11 10 13.5 L14 9.5 Q11 6 14 1 Z" fill="#2a5cd0" opacity="0.55"/><path d="M14 26 L20 20 Q22 16 18 13.5 L14 17.5 Q17 21 14 26 Z" fill="#2a5cd0" opacity="0.55"/></svg><div class="t" style="left:2334.5px;top:873.3px;font-size:23px;color:#6b6d85;font-weight:400;letter-spacing:0px;transform-origin:0 19.47px;transform:scaleY(1.05);">1</div><svg style="position:absolute;left:2363.0px;top:880.6px;" width="15" height="10" viewBox="0 0 15 10"><path d="M1 1 L14 1 L7.5 9 Z" fill="#2f70d2"/></svg><div style="position:absolute;left:2511.0px;top:865.9px;width:139.6px;height:38.0px;background:#f3f2f8;border-radius:6px;"></div><svg style="position:absolute;left:2519.0px;top:870.0px;" width="27" height="27" viewBox="0 0 27 27"><g fill="#63a952"><rect x="2" y="7.4" width="3.8" height="17.1" rx="1"/>
<path d="M7.8 24.5 L7.8 4 Q7.8 2 9.8 2 Q11.8 2 11.8 4 L11.8 7.4 L24 7.4 L21.8 24.5 Z"/></g></svg><div class="t" style="left:2553.2px;top:877.8px;font-size:15.5px;color:#0e1b2f;font-weight:700;letter-spacing:0px;transform-origin:0 13.12px;transform:scaleY(1.05);">APPROVED</div><svg style="position:absolute;left:2863.0px;top:871.7px;" width="10" height="28" viewBox="0 0 10 28"><circle cx="5" cy="4.0" r="3.1" fill="#acadc0"/><circle cx="5" cy="13.6" r="3.1" fill="#acadc0"/><circle cx="5" cy="23.2" r="3.1" fill="#acadc0"/></svg><div style="position:absolute;left:416.2px;top:947.3px;width:2510.5px;height:97.6px;background:#fdfdfe;border-radius:8px;box-shadow:0 2px 4px rgba(60,62,80,0.09), 0 0 1px rgba(60,62,80,0.10);"></div><div style="position:absolute;left:449.0px;top:976.9px;width:116.0px;height:37.6px;background:#f9e8e6;border-radius:6px;"></div><div class="t" style="left:463.0px;top:987.0px;font-size:19px;color:#a6231f;font-weight:700;letter-spacing:0px;transform-origin:0 16.08px;transform:scaleY(1.05);">CRITICAL</div><div class="t" style="left:669.9px;top:985.7px;font-size:22px;color:#5f637b;font-weight:400;letter-spacing:0px;transform-origin:0 18.62px;transform:scaleY(1.05);">SCA</div><div class="t" style="left:888.7px;top:984.7px;font-size:23px;color:#5f637b;font-weight:400;letter-spacing:0.25px;transform-origin:0 19.47px;transform:scaleY(1.05);">CVE-2021-44906: minimist@0.0.8 (lang-pkgs, node-pkg)</div><div class="t" style="left:1654.0px;top:984.5px;font-size:23px;color:#5f637b;font-weight:400;letter-spacing:0px;transform-origin:0 19.47px;transform:scaleY(1.05);">5</div><div class="t" style="left:1868.5px;top:984.5px;font-size:23px;color:#5f637b;font-weight:400;letter-spacing:0px;transform-origin:0 19.47px;transform:scaleY(1.05);">26</div><div class="t" style="left:2083.0px;top:987.4px;font-size:20px;color:#5f637b;font-weight:400;letter-spacing:0px;transform-origin:0 16.93px;transform:scaleY(1.05);">4 weeks ago</div><div style="position:absolute;left:2511.0px;top:976.9px;width:139.6px;height:38.0px;background:#f3f2f8;border-radius:6px;"></div><svg style="position:absolute;left:2519.0px;top:981.0px;" width="27" height="27" viewBox="0 0 27 27"><g fill="#63a952"><rect x="2" y="7.4" width="3.8" height="17.1" rx="1"/>
<path d="M7.8 24.5 L7.8 4 Q7.8 2 9.8 2 Q11.8 2 11.8 4 L11.8 7.4 L24 7.4 L21.8 24.5 Z"/></g></svg><div class="t" style="left:2553.2px;top:988.8px;font-size:15.5px;color:#0e1b2f;font-weight:700;letter-spacing:0px;transform-origin:0 13.12px;transform:scaleY(1.05);">APPROVED</div><svg style="position:absolute;left:2863.0px;top:982.7px;" width="10" height="28" viewBox="0 0 10 28"><circle cx="5" cy="4.0" r="3.1" fill="#acadc0"/><circle cx="5" cy="13.6" r="3.1" fill="#acadc0"/><circle cx="5" cy="23.2" r="3.1" fill="#acadc0"/></svg><div style="position:absolute;left:416.2px;top:1058.3px;width:2510.5px;height:97.6px;background:#fdfdfe;border-radius:8px;box-shadow:0 2px 4px rgba(60,62,80,0.09), 0 0 1px rgba(60,62,80,0.10);"></div><div style="position:absolute;left:449.0px;top:1087.9px;width:116.0px;height:37.6px;background:#f9e8e6;border-radius:6px;"></div><div class="t" style="left:463.0px;top:1098.0px;font-size:19px;color:#a6231f;font-weight:700;letter-spacing:0px;transform-origin:0 16.08px;transform:scaleY(1.05);">CRITICAL</div><div class="t" style="left:669.9px;top:1096.7px;font-size:22px;color:#5f637b;font-weight:400;letter-spacing:0px;transform-origin:0 18.62px;transform:scaleY(1.05);">SCA</div><div class="t" style="left:888.7px;top:1095.7px;font-size:23px;color:#5f637b;font-weight:400;letter-spacing:0.25px;transform-origin:0 19.47px;transform:scaleY(1.05);">CVE-2020-7788: ini@1.3.5 (lang-pkgs, node-pkg)</div><div class="t" style="left:1654.0px;top:1095.5px;font-size:23px;color:#5f637b;font-weight:400;letter-spacing:0px;transform-origin:0 19.47px;transform:scaleY(1.05);">6</div><div class="t" style="left:1868.5px;top:1095.5px;font-size:23px;color:#5f637b;font-weight:400;letter-spacing:0px;transform-origin:0 19.47px;transform:scaleY(1.05);">6</div><div class="t" style="left:2083.0px;top:1098.4px;font-size:20px;color:#5f637b;font-weight:400;letter-spacing:0px;transform-origin:0 16.93px;transform:scaleY(1.05);">4 weeks ago</div><div style="position:absolute;left:2511.0px;top:1087.9px;width:139.6px;height:38.0px;background:#f3f2f8;border-radius:6px;"></div><svg style="position:absolute;left:2519.0px;top:1092.0px;" width="27" height="27" viewBox="0 0 27 27"><g fill="#63a952"><rect x="2" y="7.4" width="3.8" height="17.1" rx="1"/>
<path d="M7.8 24.5 L7.8 4 Q7.8 2 9.8 2 Q11.8 2 11.8 4 L11.8 7.4 L24 7.4 L21.8 24.5 Z"/></g></svg><div class="t" style="left:2553.2px;top:1099.8px;font-size:15.5px;color:#0e1b2f;font-weight:700;letter-spacing:0px;transform-origin:0 13.12px;transform:scaleY(1.05);">APPROVED</div><svg style="position:absolute;left:2863.0px;top:1093.7px;" width="10" height="28" viewBox="0 0 10 28"><circle cx="5" cy="4.0" r="3.1" fill="#acadc0"/><circle cx="5" cy="13.6" r="3.1" fill="#acadc0"/><circle cx="5" cy="23.2" r="3.1" fill="#acadc0"/></svg><div style="position:absolute;left:416.2px;top:1169.3px;width:2510.5px;height:97.6px;background:#fdfdfe;border-radius:8px;box-shadow:0 2px 4px rgba(60,62,80,0.09), 0 0 1px rgba(60,62,80,0.10);"></div><div style="position:absolute;left:449.0px;top:1198.9px;width:116.0px;height:37.6px;background:#f9e8e6;border-radius:6px;"></div><div class="t" style="left:463.0px;top:1209.0px;font-size:19px;color:#a6231f;font-weight:700;letter-spacing:0px;transform-origin:0 16.08px;transform:scaleY(1.05);">CRITICAL</div><div class="t" style="left:669.9px;top:1207.7px;font-size:22px;color:#5f637b;font-weight:400;letter-spacing:0px;transform-origin:0 18.62px;transform:scaleY(1.05);">SCA</div><div class="t" style="left:888.7px;top:1206.7px;font-size:23px;color:#5f637b;font-weight:400;letter-spacing:0.25px;transform-origin:0 19.47px;transform:scaleY(1.05);">CVE-2019-10746: mixin-deep@1.3.1 (lang-pkgs, node-pkg)</div><div class="t" style="left:1654.0px;top:1206.5px;font-size:23px;color:#5f637b;font-weight:400;letter-spacing:0px;transform-origin:0 19.47px;transform:scaleY(1.05);">4</div><div class="t" style="left:1868.5px;top:1206.5px;font-size:23px;color:#5f637b;font-weight:400;letter-spacing:0px;transform-origin:0 19.47px;transform:scaleY(1.05);">4</div><div class="t" style="left:2083.0px;top:1209.4px;font-size:20px;color:#5f637b;font-weight:400;letter-spacing:0px;transform-origin:0 16.93px;transform:scaleY(1.05);">4 weeks ago</div><div style="position:absolute;left:2511.0px;top:1198.9px;width:139.6px;height:38.0px;background:#f3f2f8;border-radius:6px;"></div><svg style="position:absolute;left:2519.0px;top:1203.0px;" width="27" height="27" viewBox="0 0 27 27"><g fill="#63a952"><rect x="2" y="7.4" width="3.8" height="17.1" rx="1"/>
<path d="M7.8 24.5 L7.8 4 Q7.8 2 9.8 2 Q11.8 2 11.8 4 L11.8 7.4 L24 7.4 L21.8 24.5 Z"/></g></svg><div class="t" style="left:2553.2px;top:1210.8px;font-size:15.5px;color:#0e1b2f;font-weight:700;letter-spacing:0px;transform-origin:0 13.12px;transform:scaleY(1.05);">APPROVED</div><svg style="position:absolute;left:2863.0px;top:1204.7px;" width="10" height="28" viewBox="0 0 10 28"><circle cx="5" cy="4.0" r="3.1" fill="#acadc0"/><circle cx="5" cy="13.6" r="3.1" fill="#acadc0"/><circle cx="5" cy="23.2" r="3.1" fill="#acadc0"/></svg><div style="position:absolute;left:416.2px;top:1280.3px;width:2510.5px;height:97.6px;background:#fdfdfe;border-radius:8px;box-shadow:0 2px 4px rgba(60,62,80,0.09), 0 0 1px rgba(60,62,80,0.10);"></div><div style="position:absolute;left:449.0px;top:1309.9px;width:116.0px;height:37.6px;background:#f9e8e6;border-radius:6px;"></div><div class="t" style="left:463.0px;top:1320.0px;font-size:19px;color:#a6231f;font-weight:700;letter-spacing:0px;transform-origin:0 16.08px;transform:scaleY(1.05);">CRITICAL</div><div class="t" style="left:669.9px;top:1318.7px;font-size:22px;color:#5f637b;font-weight:400;letter-spacing:0px;transform-origin:0 18.62px;transform:scaleY(1.05);">SCA</div><div class="t" style="left:888.7px;top:1317.7px;font-size:23px;color:#5f637b;font-weight:400;letter-spacing:0.25px;transform-origin:0 19.47px;transform:scaleY(1.05);">CVE-2019-10747: set-value@0.4.3 (lang-pkgs, node-pkg)</div><div class="t" style="left:1654.0px;top:1317.5px;font-size:23px;color:#5f637b;font-weight:400;letter-spacing:0px;transform-origin:0 19.47px;transform:scaleY(1.05);">4</div><div class="t" style="left:1868.5px;top:1317.5px;font-size:23px;color:#5f637b;font-weight:400;letter-spacing:0px;transform-origin:0 19.47px;transform:scaleY(1.05);">8</div><div class="t" style="left:2083.0px;top:1320.4px;font-size:20px;color:#5f637b;font-weight:400;letter-spacing:0px;transform-origin:0 16.93px;transform:scaleY(1.05);">4 weeks ago</div><div style="position:absolute;left:2511.0px;top:1309.9px;width:139.6px;height:38.0px;background:#f3f2f8;border-radius:6px;"></div><svg style="position:absolute;left:2519.0px;top:1314.0px;" width="27" height="27" viewBox="0 0 27 27"><g fill="#63a952"><rect x="2" y="7.4" width="3.8" height="17.1" rx="1"/>
<path d="M7.8 24.5 L7.8 4 Q7.8 2 9.8 2 Q11.8 2 11.8 4 L11.8 7.4 L24 7.4 L21.8 24.5 Z"/></g></svg><div class="t" style="left:2553.2px;top:1321.8px;font-size:15.5px;color:#0e1b2f;font-weight:700;letter-spacing:0px;transform-origin:0 13.12px;transform:scaleY(1.05);">APPROVED</div><svg style="position:absolute;left:2863.0px;top:1315.7px;" width="10" height="28" viewBox="0 0 10 28"><circle cx="5" cy="4.0" r="3.1" fill="#acadc0"/><circle cx="5" cy="13.6" r="3.1" fill="#acadc0"/><circle cx="5" cy="23.2" r="3.1" fill="#acadc0"/></svg><div style="position:absolute;left:416.2px;top:1391.3px;width:2510.5px;height:97.6px;background:#fdfdfe;border-radius:8px;box-shadow:0 2px 4px rgba(60,62,80,0.09), 0 0 1px rgba(60,62,80,0.10);"></div><div style="position:absolute;left:449.0px;top:1420.9px;width:116.0px;height:37.6px;background:#f9e8e6;border-radius:6px;"></div><div class="t" style="left:463.0px;top:1431.0px;font-size:19px;color:#a6231f;font-weight:700;letter-spacing:0px;transform-origin:0 16.08px;transform:scaleY(1.05);">CRITICAL</div><div class="t" style="left:669.9px;top:1429.7px;font-size:22px;color:#5f637b;font-weight:400;letter-spacing:0px;transform-origin:0 18.62px;transform:scaleY(1.05);">SCA</div><div class="t" style="left:888.7px;top:1428.7px;font-size:23px;color:#5f637b;font-weight:400;letter-spacing:0.25px;transform-origin:0 19.47px;transform:scaleY(1.05);">swig//1.4.2</div><div class="t" style="left:1654.0px;top:1428.5px;font-size:23px;color:#5f637b;font-weight:400;letter-spacing:0px;transform-origin:0 19.47px;transform:scaleY(1.05);">1</div><div class="t" style="left:1868.5px;top:1428.5px;font-size:23px;color:#5f637b;font-weight:400;letter-spacing:0px;transform-origin:0 19.47px;transform:scaleY(1.05);">2</div><div class="t" style="left:2083.0px;top:1431.4px;font-size:20px;color:#5f637b;font-weight:400;letter-spacing:0px;transform-origin:0 16.93px;transform:scaleY(1.05);">1 month ago</div><div style="position:absolute;left:2511.0px;top:1421.0px;width:122.8px;height:38.9px;background:#f3ac76;border-radius:7px;"></div><svg style="position:absolute;left:2519.0px;top:1429.6px;" width="30" height="22" viewBox="0 0 30 22"><path d="M1.6 11.2 C5 4.5 11 3 15 3.3 C20 3.6 24 6.5 26.9 9.8 C23.5 15 19 18.6 13 18.8 C8 18.8 4 15.5 1.6 11.2 Z" fill="#676b86"/>
<circle cx="14.3" cy="10.9" r="5.3" fill="#f3ac76"/><circle cx="14.3" cy="10.9" r="3.7" fill="#676b86"/>
<path d="M2.5 19.5 L26.5 2.5" stroke="#f3ac76" stroke-width="5.2" stroke-linecap="round"/>
<path d="M2.5 19.5 L26.5 2.5" stroke="#676b86" stroke-width="2.6" stroke-linecap="round"/></svg><div class="t" style="left:2553.6px;top:1432.6px;font-size:15.5px;color:#2a2f45;font-weight:700;letter-spacing:0px;transform-origin:0 13.12px;transform:scaleY(1.05);">PENDING</div><svg style="position:absolute;left:2863.0px;top:1426.7px;" width="10" height="28" viewBox="0 0 10 28"><circle cx="5" cy="4.0" r="3.1" fill="#acadc0"/><circle cx="5" cy="13.6" r="3.1" fill="#acadc0"/><circle cx="5" cy="23.2" r="3.1" fill="#acadc0"/></svg><div style="position:absolute;left:416.2px;top:1502.3px;width:2510.5px;height:97.6px;background:#fdfdfe;border-radius:8px;box-shadow:0 2px 4px rgba(60,62,80,0.09), 0 0 1px rgba(60,62,80,0.10);"></div><div style="position:absolute;left:449.0px;top:1531.9px;width:116.0px;height:37.6px;background:#f9e8e6;border-radius:6px;"></div><div class="t" style="left:463.0px;top:1542.0px;font-size:19px;color:#a6231f;font-weight:700;letter-spacing:0px;transform-origin:0 16.08px;transform:scaleY(1.05);">CRITICAL</div><div class="t" style="left:669.9px;top:1540.7px;font-size:22px;color:#5f637b;font-weight:400;letter-spacing:0px;transform-origin:0 18.62px;transform:scaleY(1.05);">SAST</div><div class="t" style="left:888.7px;top:1539.7px;font-size:23px;color:#5f637b;font-weight:400;letter-spacing:0.25px;transform-origin:0 19.47px;transform:scaleY(1.05);">webpack@5.64.1</div><div class="t" style="left:1654.0px;top:1539.5px;font-size:23px;color:#5f637b;font-weight:400;letter-spacing:0px;transform-origin:0 19.47px;transform:scaleY(1.05);">1</div><div class="t" style="left:1868.5px;top:1539.5px;font-size:23px;color:#5f637b;font-weight:400;letter-spacing:0px;transform-origin:0 19.47px;transform:scaleY(1.05);">1</div><div class="t" style="left:2083.0px;top:1542.4px;font-size:20px;color:#5f637b;font-weight:400;letter-spacing:0px;transform-origin:0 16.93px;transform:scaleY(1.05);">2 months ago</div><div style="position:absolute;left:2511.0px;top:1531.9px;width:139.6px;height:38.0px;background:#f3f2f8;border-radius:6px;"></div><svg style="position:absolute;left:2519.0px;top:1536.0px;" width="27" height="27" viewBox="0 0 27 27"><g fill="#63a952"><rect x="2" y="7.4" width="3.8" height="17.1" rx="1"/>
<path d="M7.8 24.5 L7.8 4 Q7.8 2 9.8 2 Q11.8 2 11.8 4 L11.8 7.4 L24 7.4 L21.8 24.5 Z"/></g></svg><div class="t" style="left:2553.2px;top:1543.8px;font-size:15.5px;color:#0e1b2f;font-weight:700;letter-spacing:0px;transform-origin:0 13.12px;transform:scaleY(1.05);">APPROVED</div><svg style="position:absolute;left:2863.0px;top:1537.7px;" width="10" height="28" viewBox="0 0 10 28"><circle cx="5" cy="4.0" r="3.1" fill="#acadc0"/><circle cx="5" cy="13.6" r="3.1" fill="#acadc0"/><circle cx="5" cy="23.2" r="3.1" fill="#acadc0"/></svg><div style="position:absolute;left:416.2px;top:1613.3px;width:2510.5px;height:97.6px;background:#fdfdfe;border-radius:8px;box-shadow:0 2px 4px rgba(60,62,80,0.09), 0 0 1px rgba(60,62,80,0.10);"></div><div style="position:absolute;left:449.0px;top:1642.9px;width:116.0px;height:37.6px;background:#f9e8e6;border-radius:6px;"></div><div class="t" style="left:463.0px;top:1653.0px;font-size:19px;color:#a6231f;font-weight:700;letter-spacing:0px;transform-origin:0 16.08px;transform:scaleY(1.05);">CRITICAL</div><div class="t" style="left:669.9px;top:1651.7px;font-size:22px;color:#5f637b;font-weight:400;letter-spacing:0px;transform-origin:0 18.62px;transform:scaleY(1.05);">SAST</div><div class="t" style="left:888.7px;top:1650.7px;font-size:23px;color:#5f637b;font-weight:400;letter-spacing:0.25px;transform-origin:0 19.47px;transform:scaleY(1.05);">django@1.2</div><div class="t" style="left:1654.0px;top:1650.5px;font-size:23px;color:#5f637b;font-weight:400;letter-spacing:0px;transform-origin:0 19.47px;transform:scaleY(1.05);">1</div><div class="t" style="left:1868.5px;top:1650.5px;font-size:23px;color:#5f637b;font-weight:400;letter-spacing:0px;transform-origin:0 19.47px;transform:scaleY(1.05);">22</div><div class="t" style="left:2083.0px;top:1653.4px;font-size:20px;color:#5f637b;font-weight:400;letter-spacing:0px;transform-origin:0 16.93px;transform:scaleY(1.05);">2 months ago</div><div style="position:absolute;left:2511.0px;top:1642.9px;width:139.6px;height:38.0px;background:#f3f2f8;border-radius:6px;"></div><svg style="position:absolute;left:2519.0px;top:1647.0px;" width="27" height="27" viewBox="0 0 27 27"><g fill="#63a952"><rect x="2" y="7.4" width="3.8" height="17.1" rx="1"/>
<path d="M7.8 24.5 L7.8 4 Q7.8 2 9.8 2 Q11.8 2 11.8 4 L11.8 7.4 L24 7.4 L21.8 24.5 Z"/></g></svg><div class="t" style="left:2553.2px;top:1654.8px;font-size:15.5px;color:#0e1b2f;font-weight:700;letter-spacing:0px;transform-origin:0 13.12px;transform:scaleY(1.05);">APPROVED</div><svg style="position:absolute;left:2863.0px;top:1648.7px;" width="10" height="28" viewBox="0 0 10 28"><circle cx="5" cy="4.0" r="3.1" fill="#acadc0"/><circle cx="5" cy="13.6" r="3.1" fill="#acadc0"/><circle cx="5" cy="23.2" r="3.1" fill="#acadc0"/></svg><div style="position:absolute;left:2744.5px;top:1560px;width:156px;height:51px;box-sizing:border-box;border-radius:26px;padding:2px;background:linear-gradient(100deg,#e58bc2 0%,#7b3fd6 35%,#4a4ad6 65%,#55c7e6 100%);">
<div style="width:100%;height:100%;border-radius:24px;background:#ffffff;"></div></div><svg style="position:absolute;left:2762.0px;top:1567.0px;" width="36" height="37" viewBox="0 0 36 37"><defs><radialGradient id="bot" cx="0.4" cy="0.35" r="0.7"><stop offset="0" stop-color="#f0c8ff"/><stop offset="1" stop-color="#b77ef0"/></radialGradient></defs>
<circle cx="18" cy="4.5" r="1.5" fill="#b77ef0"/><path d="M18 5 L18 8" stroke="#b77ef0" stroke-width="1.2"/>
<path d="M4 24 L2 30 L7 28 Z" fill="#c79af5"/><path d="M32 24 L34 30 L29 28 Z" fill="#c79af5"/>
<ellipse cx="18" cy="22" rx="13" ry="13.5" fill="url(#bot)"/>
<circle cx="12.3" cy="18.6" r="3" fill="#f3dcff" stroke="#5a3fb0" stroke-width="2"/><circle cx="23.7" cy="18.6" r="3" fill="#f3dcff" stroke="#5a3fb0" stroke-width="2"/>
<path d="M16.6 21.3 L19.4 21.3 L18 23 Z" fill="#5a3fb0"/></svg><div class="t" style="left:2802.4px;top:1574.2px;font-size:22px;letter-spacing:0.7px;font-weight:700;background:linear-gradient(90deg,#d77fc0 0%,#8f4fd6 35%,#5a48d8 55%,#5d7fe0 78%,#68c0e0 100%);-webkit-background-clip:text;background-clip:text;color:transparent;">Ask AI</div><div style="position:absolute;left:2956.0px;top:0.0px;width:22.0px;height:1688.0px;background:linear-gradient(90deg,rgba(200,202,215,0) 0%,rgba(200,202,215,0.42) 100%);"></div><div style="position:absolute;left:2978.0px;top:0.0px;width:2.0px;height:1688.0px;background:#f8f8fb;"></div><div style="position:absolute;left:0;top:1678px;width:17px;height:10px;background:radial-gradient(17px 10px at 17px 0px, transparent 96%, #000 100%);"></div><div style="position:absolute;left:2963px;top:1679px;width:17px;height:9px;background:radial-gradient(17px 9px at 0px 0px, transparent 96%, #000 100%);"></div>
</body></html>
